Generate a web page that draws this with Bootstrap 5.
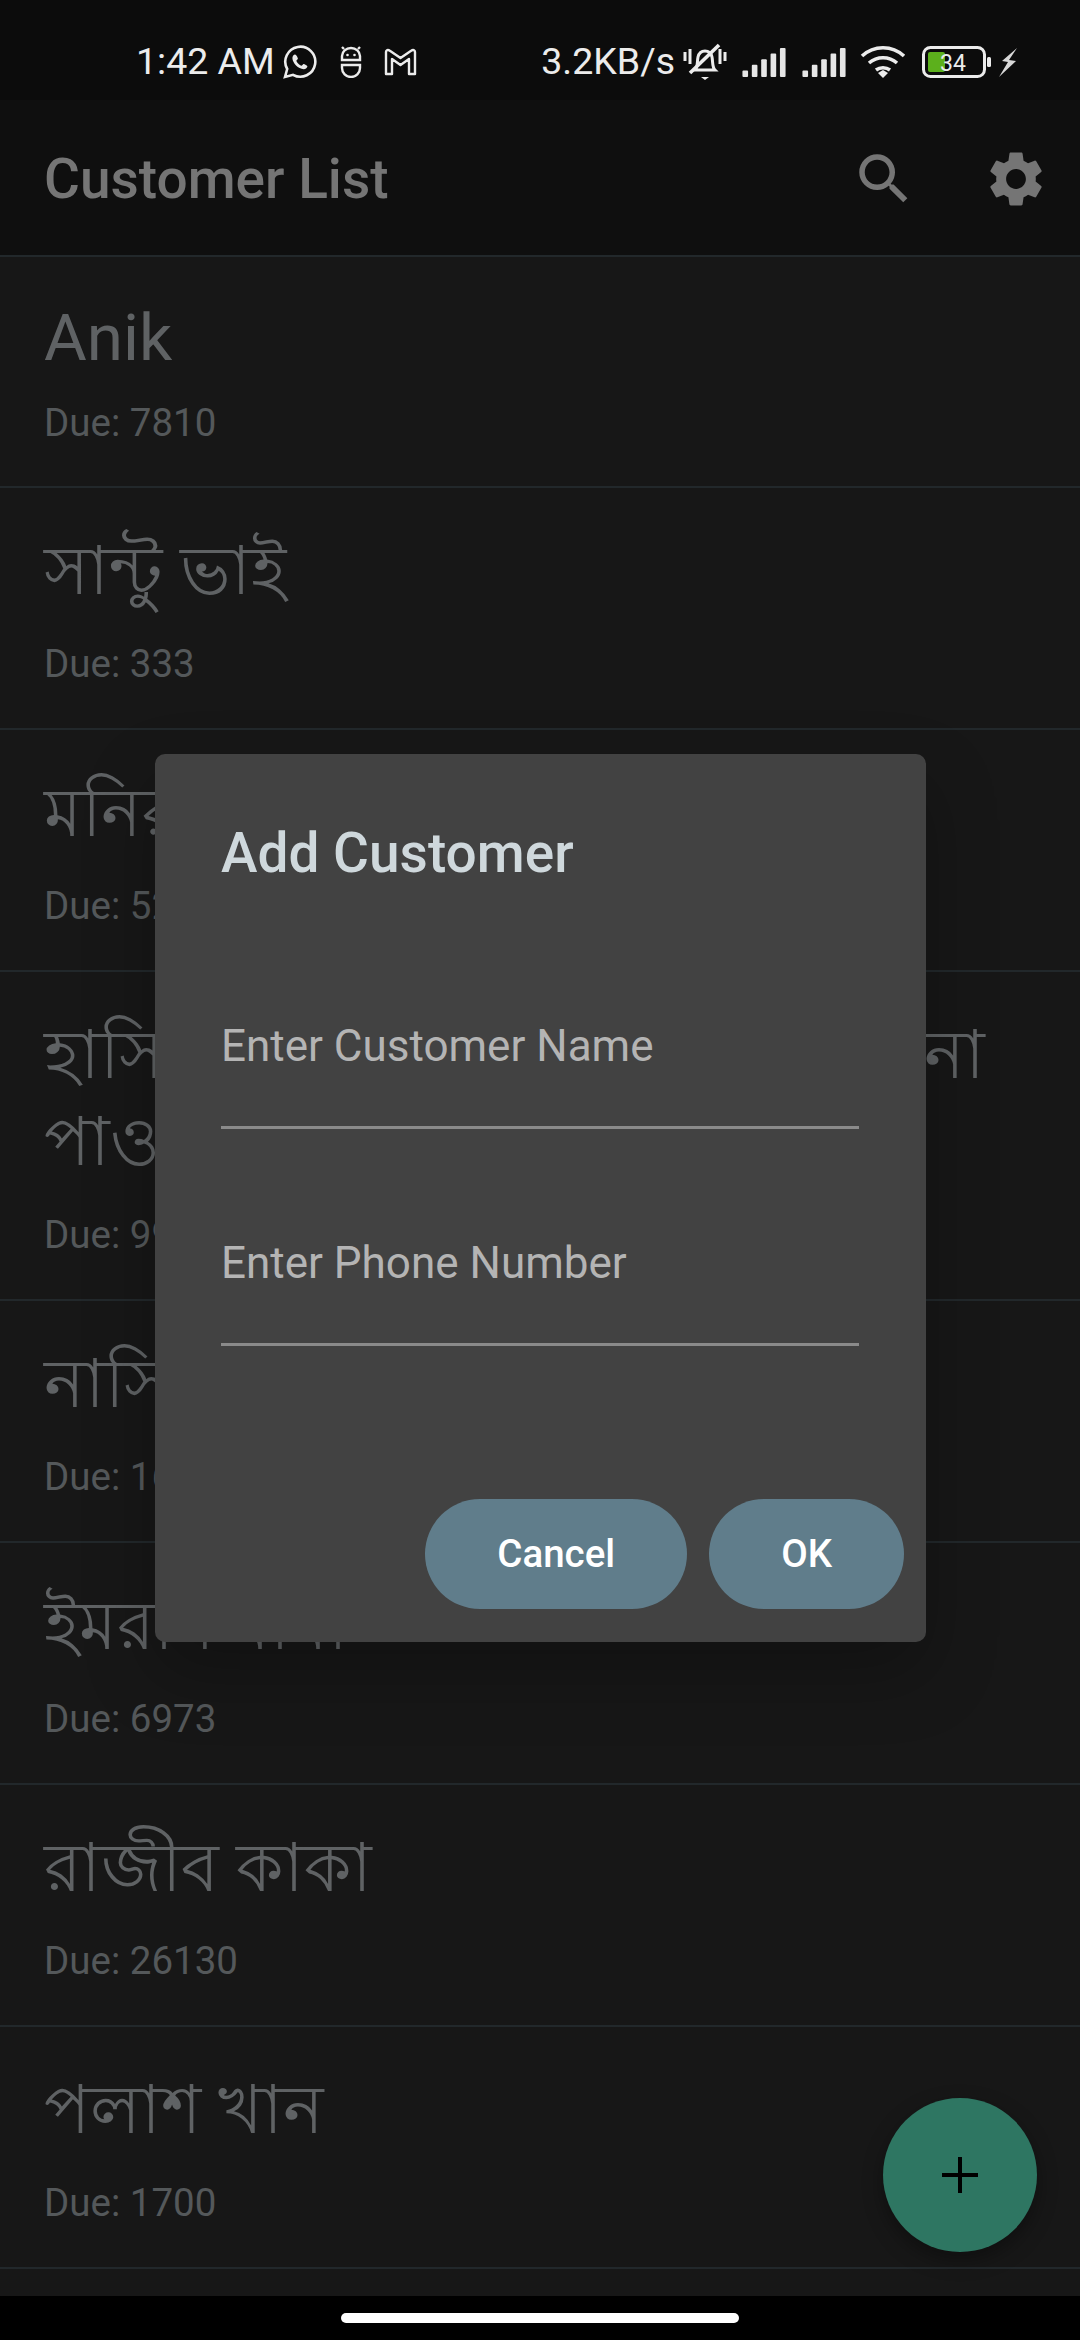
<!DOCTYPE html>
<html lang="bn">
<head>
  <meta charset="UTF-8">
  <meta name="viewport" content="width=device-width, initial-scale=1.0">
  <title>Customer List</title>
  <link href="https://cdn.jsdelivr.net/npm/bootstrap@5.3.0/dist/css/bootstrap.min.css" rel="stylesheet">
  <style>
    body { background: #171717; font-family: Roboto, "Noto Sans", sans-serif; height: 2340px; overflow: hidden; }
    .phone { height: 2340px; width: 1080px; }
    .status-strip { height: 100px; background: #0c0c0c; color: #ececec; font-size: 37.5px; line-height: 1; padding: 24px 63px 0 136px; flex: none; }
    .status-strip svg { display: block; }
    .app-bar { height: 157px; background: #0f0f0f; border-bottom: 2px solid #22282b; padding: 2px 31px 0 44px; flex: none; }
    .app-title { color: #757575; font-size: 55px; font-weight: 500; margin: 0; }
    .app-actions { gap: 66px; }
    .customer-list { flex: 1 1 auto; overflow: hidden; --bs-list-group-bg: transparent; --bs-list-group-border-color: #22282b; }
    .customer-row { padding: 40px 44px 0; height: 242px; border-bottom: 2px solid #22282b !important; }
    .customer-row.tall { height: 329px; }
    .customer-row.first { height: 231px; padding-top: 37px; }
    .customer-name { color: #5f6264; font-size: 68px; line-height: 87px; white-space: nowrap; }
    .first .customer-name { font-size: 65.6px; }
    .customer-due { color: #54585a; font-size: 38.5px; line-height: 45px; margin-top: 26px; }
    .first .customer-due { margin-top: 19px; }
    .nav-strip { height: 44px; background: #000; flex: none; }
    .home-pill { width: 398px; height: 10px; background: #fff; border-radius: 5px; }
    .add-dialog { position: absolute; left: 155px; top: 754px; width: 771px; height: 888px; background: #424242; border: 0; border-radius: 10px; padding: 66px 22px 33px 66px; box-shadow: 0 30px 70px rgba(0,0,0,.25); }
    .dialog-title { color: #cfd8dc; font-size: 55px; font-weight: 500; line-height: 66px; margin: 0 0 130px; }
    .dialog-field { margin-right: 45px; margin-bottom: 104px; height: 113px; border-bottom: 3px solid #8a8a8a; color: #b4b4b4; font-size: 44px; line-height: 60px; }
    .dialog-actions { gap: 22px; margin-top: auto; }
    .btn-dialog { background: #607d8b; color: #fff; font-size: 38.5px; font-weight: 500; height: 110px; border: 0; border-radius: 55px; padding: 0 72px; }
    .add-fab { position: absolute; left: 883px; top: 2098px; width: 154px; height: 154px; background: #2e7662; border: 0; box-shadow: 0 8px 20px rgba(0,0,0,.35); }
  </style>
</head>
<body>
  <div class="phone position-relative d-flex flex-column">

    <!-- status bar -->
    <div class="status-strip d-flex align-items-center">
      <span>1:42 AM</span>
      <svg class="ms-2" width="34" height="34" viewBox="0 0 34 34" fill="none" stroke="#ececec" stroke-width="2.6"><path d="M2 32l2.2-8A15 15 0 1 1 10 29.8z"/><path fill="#ececec" stroke="none" d="M12 9.5c-1.2 0-2.6 1.5-2.6 3.6 0 5 6 11 11.200 11.200 2.200 0 3.800-1.600 3.800-3.100 0-.6-3.400-2.400-4-2.200-.6.300-1.300 1.700-2 1.700-1.600-.1-4.700-3.400-5-4.900 0-.6 1.400-1.400 1.500-2.100 0-.7-1.500-4.200-2.900-4.200z"/></svg>
      <svg style="margin-left:22px" width="24" height="32" viewBox="0 0 24 32" fill="none" stroke="#ececec" stroke-width="2.4"><path d="M3 14v-4a9 8 0 0 1 18 0v4z"/><path d="M3 19h18v3a9 9 0 0 1-18 0z"/><path d="M3 1l2 2M21 1l-2 2"/><circle cx="8.500" cy="9" r="1.300" fill="#ececec" stroke="none"/><circle cx="15.500" cy="9" r="1.300" fill="#ececec" stroke="none"/></svg>
      <svg style="margin-left:21px" width="33" height="28" viewBox="0 0 33 28" fill="none" stroke="#ececec" stroke-width="2.4" stroke-linejoin="round"><path d="M2 4c0-2 2-2.600 3.500-1.500L16.500 10l11-7.500C29 1.400 31 2 31 4v22h-6V11l-8.500 6L8 11v15H2z"/></svg>
      <span class="ms-auto">3.2KB/s</span>
      <svg class="ms-2" width="44" height="38" viewBox="0 0 44 38" fill="none" stroke="#ececec" stroke-width="3"><path d="M12 27c3-3 2-8 3-13 1-4 4-6 7-6s6 2 7 6c1 5 0 10 3 13z"/><path d="M7 30L36 2" stroke-width="3.600"/><path d="M2 9v9M7 6v15M37 6v15M42 9v9"/><path d="M18 34h8l-4 3z" fill="#ececec" stroke="none"/></svg>
      <svg style="margin-left:13px" width="48" height="30" viewBox="0 0 48 32" fill="#e6e6e6"><rect x="1" y="25" width="6" height="7" rx="1"/><rect x="11" y="19" width="6" height="13" rx="1"/><rect x="21" y="13" width="6" height="19" rx="1"/><rect x="31" y="7" width="6" height="25" rx="1"/><rect x="41" y="1" width="6" height="31" rx="1"/></svg>
      <svg style="margin-left:12px" width="48" height="30" viewBox="0 0 48 32" fill="#e6e6e6"><rect x="1" y="25" width="6" height="7" rx="1"/><rect x="11" y="19" width="6" height="13" rx="1"/><rect x="21" y="13" width="6" height="19" rx="1"/><rect x="31" y="7" width="6" height="25" rx="1"/><rect x="41" y="1" width="6" height="31" rx="1"/></svg>
      <svg style="margin-left:12px" width="46" height="34" viewBox="0 0 46 34" fill="none" stroke="#ececec" stroke-width="3.600"><path d="M2 11c12-11 30-11 42 0M9 18c8-7 20-7 28 0M16 25c4-3 10-3 14 0"/><path d="M18 28l5-3 5 3-5 5z" fill="#ececec" stroke="none"/></svg>
      <svg style="margin-left:16px" width="69" height="32" viewBox="0 0 69 32"><rect x="1.500" y="1.500" width="61" height="29" rx="7" fill="none" stroke="#ececec" stroke-width="3"/><rect x="6" y="6" width="17" height="20" rx="2" fill="#5cb01c"/><text x="18" y="25" font-family="Roboto" font-size="23" fill="#ececec">34</text><rect x="65" y="11" width="4" height="10" rx="1.500" fill="#ececec"/></svg>
      <svg style="margin-left:7px" width="19" height="30" viewBox="0 0 19 30" fill="#d8d8d8"><path d="M19 1L4 14l6 1-9 15 17-16-7-1z"/></svg>
    </div>

    <!-- app bar -->
    <div class="app-bar d-flex align-items-center">
      <h1 class="app-title">Customer List</h1>
      <div class="app-actions d-flex ms-auto">
        <svg width="66" height="66" viewBox="0 0 24 24" fill="#757575"><path d="M15.5 14h-.79l-.28-.27A6.471 6.471 0 0 0 16 9.500 6.500 6.500 0 1 0 9.500 16c1.610 0 3.090-.59 4.230-1.570l.27.28v.79l5 4.990L20.490 19l-4.990-5zm-6 0C7.010 14 5 11.990 5 9.500S7.010 5 9.500 5 14 7.010 14 9.500 11.990 14 9.500 14z"/></svg>
        <svg width="66" height="66" viewBox="0 0 24 24" fill="#757575"><path d="M19.140,12.940c0.040-0.300,0.060-0.610,0.060-0.940c0-0.320-0.020-0.640-0.070-0.940l2.030-1.580c0.180-0.140,0.230-0.410,0.120-0.610 l-1.920-3.320c-0.120-0.220-0.370-0.290-0.590-0.220l-2.390,0.960c-0.500-0.380-1.030-0.700-1.620-0.940L14.400,2.810c-0.040-0.240-0.240-0.410-0.480-0.410 h-3.840c-0.240,0-0.430,0.170-0.470,0.410L9.250,5.350C8.660,5.590,8.120,5.920,7.630,6.290L5.240,5.330c-0.220-0.080-0.470,0-0.590,0.220L2.740,8.870 C2.620,9.080,2.660,9.340,2.860,9.480l2.030,1.580C4.840,11.360,4.800,11.690,4.800,12s0.020,0.640,0.070,0.940l-2.030,1.580 c-0.180,0.140-0.230,0.410-0.120,0.610l1.920,3.320c0.120,0.220,0.370,0.290,0.590,0.220l2.390-0.960c0.500,0.380,1.030,0.700,1.620,0.940l0.360,2.540 c0.050,0.240,0.240,0.410,0.480,0.410h3.840c0.240,0,0.440-0.170,0.470-0.410l0.360-2.540c0.590-0.240,1.130-0.560,1.620-0.940l2.390,0.960 c0.220,0.080,0.470,0,0.590-0.220l1.920-3.320c0.120-0.220,0.070-0.470-0.120-0.610L19.140,12.940z M12,15.600c-1.980,0-3.600-1.620-3.600-3.600 s1.620-3.600,3.600-3.600s3.600,1.620,3.600,3.600S13.980,15.600,12,15.600z"/></svg>
      </div>
    </div>

    <!-- customers -->
    <div class="customer-list list-group list-group-flush">
      <div class="list-group-item customer-row first"><div class="customer-name">Anik</div><div class="customer-due">Due: 7810</div></div>
      <div class="list-group-item customer-row"><div class="customer-name">সান্টু ভাই</div><div class="customer-due">Due: 333</div></div>
      <div class="list-group-item customer-row"><div class="customer-name">মনিরুল</div><div class="customer-due">Due: 5200</div></div>
      <div class="list-group-item customer-row tall"><div class="customer-name">হাসিব ভাই দোকান থেকে টাকা ও না<br>পাওনা</div><div class="customer-due">Due: 9900</div></div>
      <div class="list-group-item customer-row"><div class="customer-name">নাসির</div><div class="customer-due">Due: 1600</div></div>
      <div class="list-group-item customer-row"><div class="customer-name">ইমরান মামা</div><div class="customer-due">Due: 6973</div></div>
      <div class="list-group-item customer-row"><div class="customer-name">রাজীব কাকা</div><div class="customer-due">Due: 26130</div></div>
      <div class="list-group-item customer-row"><div class="customer-name">পলাশ খান</div><div class="customer-due">Due: 1700</div></div>
    </div>

    <!-- gesture bar -->
    <div class="nav-strip d-flex justify-content-center align-items-center">
      <div class="home-pill"></div>
    </div>

    <!-- dialog -->
    <div class="add-dialog card">
      <h2 class="dialog-title">Add Customer</h2>
      <div class="dialog-field">Enter Customer Name</div>
      <div class="dialog-field">Enter Phone Number</div>
      <div class="dialog-actions d-flex justify-content-end">
        <button type="button" class="btn btn-dialog">Cancel</button>
        <button type="button" class="btn btn-dialog">OK</button>
      </div>
    </div>

    <!-- fab -->
    <button type="button" class="add-fab btn rounded-circle d-flex align-items-center justify-content-center p-0">
      <svg width="40" height="40" viewBox="0 0 40 40" fill="#000"><rect x="18" y="2" width="4" height="36"/><rect x="2" y="18" width="36" height="4"/></svg>
    </button>
  </div>

  <script src="https://cdn.jsdelivr.net/npm/bootstrap@5.3.0/dist/js/bootstrap.bundle.min.js"></script>
</body>
</html>
